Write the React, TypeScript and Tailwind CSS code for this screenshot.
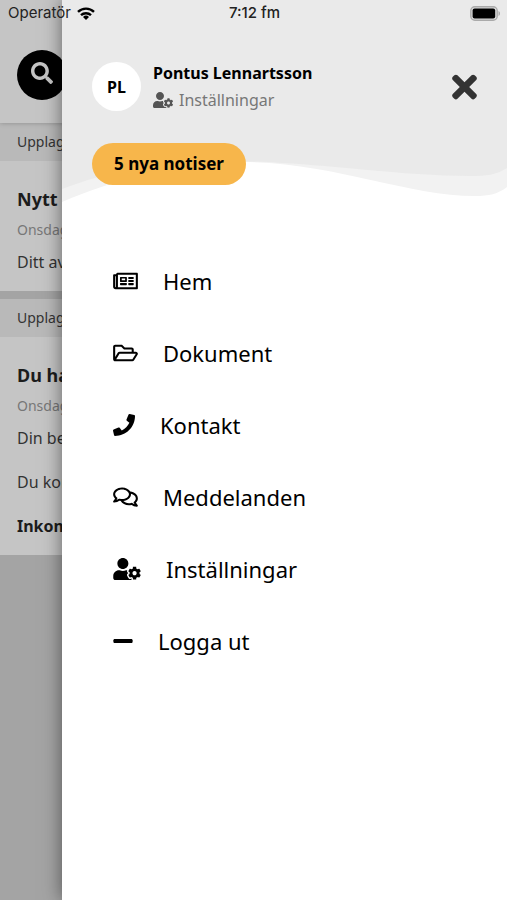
import type { ReactNode } from "react";
import type { IconType } from "react-icons";
import {
  FaMinus,
  FaPhone,
  FaRegComments,
  FaRegFolderOpen,
  FaRegNewspaper,
  FaSearch,
  FaTimes,
  FaUserCog,
} from "react-icons/fa";

const menu: { label: string; icon: IconType; width: string }[] = [
  { label: "Hem", icon: FaRegNewspaper, width: "w-[25px]" },
  { label: "Dokument", icon: FaRegFolderOpen, width: "w-[25px]" },
  { label: "Kontakt", icon: FaPhone, width: "w-[22px]" },
  { label: "Meddelanden", icon: FaRegComments, width: "w-[25px]" },
  { label: "Inställningar", icon: FaUserCog, width: "w-[28px]" },
  { label: "Logga ut", icon: FaMinus, width: "w-[20px]" },
];

function StatusBar() {
  return (
    <div className="absolute inset-x-0 top-0 z-20 grid h-[27px] grid-cols-3 items-center pl-2 pr-1.5 font-['Inter','Liberation_Sans',sans-serif] text-[15px] text-[#222]">
      <div className="flex items-center gap-1.5">
        <span>Operatör</span>
        <svg viewBox="0 0 18 13" className="h-[13px] w-[18px]" fill="none" stroke="#000" strokeWidth="2.4">
          <path d="M1 4.9a11.4 11.4 0 0 1 16 0" />
          <path d="M4 8.2a7.2 7.2 0 0 1 10 0" />
          <path d="M9 13 6 10a4.3 4.3 0 0 1 6 0z" fill="#000" stroke="none" />
        </svg>
      </div>
      <span className="text-center font-medium">7:12 fm</span>
      <svg viewBox="0 0 31 15" className="h-[15px] w-[31px] justify-self-end">
        <rect x="0.8" y="0.8" width="26.4" height="13.4" rx="4" fill="#ddd" stroke="#aaa" strokeWidth="1.4" />
        <rect x="2.6" y="2.6" width="22.6" height="9.8" rx="2" fill="#000" />
        <path d="M28.5 5v5c2-.8 2-4.200 0-5z" fill="#aaa" />
      </svg>
    </div>
  );
}

function Post({ title, children }: { title: string; children: ReactNode }) {
  return (
    <article className="bg-[#c5c5c5] text-base leading-5 text-[#333]">
      <div className="bg-[#b9b9b9] px-[17px] py-[9px] text-sm leading-5">Upplagt</div>
      <div className="flex flex-col px-[17px] pb-[19px] pt-[26px]">
        <h2 className="text-lg font-bold leading-6 text-[#1c1c1c]">{title}</h2>
        <p className="mb-3 mt-[9px] text-sm leading-5 text-[#777]">Onsdag</p>
        <div className="flex flex-col gap-6">{children}</div>
      </div>
    </article>
  );
}

function Feed() {
  return (
    <main className="whitespace-nowrap">
      <header className="relative flex h-[123px] items-center bg-[#c5c5c5] px-[17px] pt-[26px] shadow-[0_0_5px_rgba(0,0,0,0.25)]">
        <button aria-label="Sök" className="flex size-[50px] items-center justify-center rounded-full bg-black text-[#c5c5c5]">
          <FaSearch className="mb-1 size-[22px]" />
        </button>
      </header>
      <div className="flex flex-col gap-2">
        <Post title="Nytt avtal">
          <p>Ditt avtal</p>
        </Post>
        <Post title="Du har">
          <p>Din beställning</p>
          <p>Du kommer</p>
          <p className="font-bold text-[#1c1c1c]">Inkommet</p>
        </Post>
      </div>
    </main>
  );
}

function Wave() {
  return (
    <svg viewBox="0 0 445 203" preserveAspectRatio="none" className="absolute inset-x-0 top-0 -z-10 h-[203px] w-full">
      <path d="M0 0H445V187C436 194 427 196 413 196C345 196 270 162 180 162C110 162 50 181 0 202Z" fill="#f2f2f2" />
      <path d="M0 0H445V168C434 175 425 176 408 176C330 176 250 161 160 161C95 161 45 172 0 189Z" fill="#eaeaea" />
    </svg>
  );
}

function Drawer() {
  return (
    <aside className="absolute inset-y-0 left-[62px] right-0 z-10 bg-white shadow-[0_0_18px_rgba(0,0,0,0.5)]">
      <div className="relative isolate px-[30px] pt-[61px]">
        <Wave />
        <div className="flex items-center gap-3">
          <div className="flex size-[49px] items-center justify-center rounded-full bg-white font-bold">PL</div>
          <div className="flex-1">
            <p className="font-bold leading-6">Pontus Lennartsson</p>
            <a href="#installningar" className="mt-[3px] flex items-center gap-1.5 text-base leading-6 text-[#777]">
              <FaUserCog className="h-4 w-5 text-[#555]" />
              Inställningar
            </a>
          </div>
          <button aria-label="Stäng" className="text-[#333]">
            <FaTimes className="h-9 w-[25px]" />
          </button>
        </div>
        <button className="mt-[31px] h-[42px] rounded-full bg-[#f7b64b] px-[22px] text-[17px] font-bold">5 nya notiser</button>
      </div>
      <nav className="mt-[60px] px-[51px]">
        <ul>
          {menu.map(({ label, icon: Icon, width }) => (
            <li key={label}>
              <a href="#" className="flex h-[72px] items-center gap-[25px] text-[22px]">
                <Icon className={`h-[22px] ${width}`} />
                {label}
              </a>
            </li>
          ))}
        </ul>
      </nav>
    </aside>
  );
}

export default function App() {
  return (
    <div className="relative min-h-screen overflow-hidden bg-[#a4a4a4] font-['Noto_Sans',sans-serif] text-base text-black">
      <StatusBar />
      <Feed />
      <Drawer />
    </div>
  );
}
